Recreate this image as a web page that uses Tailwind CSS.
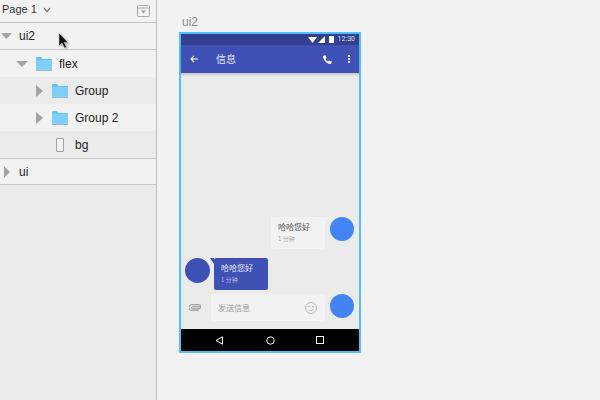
<!DOCTYPE html>
<html><head><meta charset="utf-8"><script src="https://cdn.jsdelivr.net/npm/@tailwindcss/browser@4"></script></head>
<body class="m-0">
<div class="relative w-[600px] h-[400px] overflow-hidden flex bg-[#f2f2f2] text-[12px] text-[#222] font-['Liberation_Sans','Noto_Sans_CJK_SC',sans-serif]">
  <aside class="w-[157px] h-full shrink-0 bg-[#ebebeb] border-r border-[#bdbdbd] flex flex-col">
    <div class="h-[23px] shrink-0 bg-[#f2f2f2] border-b border-[#c4c4c4] flex items-center pl-[2px] pr-[6px]">
      <span class="text-[#333] text-[11px] -mt-[3px]">Page 1</span>
      <svg class="ml-[6px] -mt-[3px]" width="8" height="6" viewBox="0 0 8 6"><path d="M1 1l3 3.500L7 1" fill="none" stroke="#777" stroke-width="1.300"/></svg>
      <svg class="ml-auto" width="13" height="12" viewBox="0 0 13 12"><rect x=".5" y=".5" width="12" height="11" rx="1" fill="none" stroke="#a8a8a8"/><path d="M1 3h11" stroke="#a8a8a8"/><path d="M4 5.500h5L6.500 8.500z" fill="#a0a0a0"/></svg>
    </div>
    <div class="h-[27px] shrink-0 bg-[#f2f2f2] border-b border-[#c8c8c8] flex items-center pl-[1px]">
      <svg width="11" height="6" viewBox="0 0 11 6"><path d="M0 0h11L5.500 6z" fill="#a3a3a3"/></svg>
      <span class="ml-[7px]">ui2</span>
    </div>
    <div class="h-[27px] shrink-0 bg-[#f2f2f2] flex items-center pl-[16px]">
      <svg width="12" height="6" viewBox="0 0 12 6"><path d="M0 0h12L6 6z" fill="#a3a3a3"/></svg>
      <svg class="ml-[8px]" width="16" height="15" viewBox="0 0 16 15"><path d="M0 2a1 1 0 0 1 1-1h4l1.500 2H16v12H0z" fill="#66c4f5"/><path d="M0 4h16v11H0z" fill="#7ed0fa"/><path d="M0 14h16v1H0z" fill="#9fb9c8"/></svg>
      <span class="ml-[7px]">flex</span>
    </div>
    <div class="h-[27px] shrink-0 bg-[#ebebeb] flex items-center pl-[36px]">
      <svg width="7" height="12" viewBox="0 0 7 12"><path d="M0 0l7 6-7 6z" fill="#a3a3a3"/></svg>
      <svg class="ml-[9px]" width="16" height="15" viewBox="0 0 16 15"><path d="M0 2a1 1 0 0 1 1-1h4l1.500 2H16v12H0z" fill="#66c4f5"/><path d="M0 4h16v11H0z" fill="#7ed0fa"/><path d="M0 14h16v1H0z" fill="#9fb9c8"/></svg>
      <span class="ml-[7px]">Group</span>
    </div>
    <div class="h-[27px] shrink-0 bg-[#f2f2f2] flex items-center pl-[36px]">
      <svg width="7" height="12" viewBox="0 0 7 12"><path d="M0 0l7 6-7 6z" fill="#a3a3a3"/></svg>
      <svg class="ml-[9px]" width="16" height="15" viewBox="0 0 16 15"><path d="M0 2a1 1 0 0 1 1-1h4l1.500 2H16v12H0z" fill="#66c4f5"/><path d="M0 4h16v11H0z" fill="#7ed0fa"/><path d="M0 14h16v1H0z" fill="#9fb9c8"/></svg>
      <span class="ml-[7px]">Group 2</span>
    </div>
    <div class="h-[28px] shrink-0 bg-[#ebebeb] border-b border-[#c8c8c8] flex items-center pl-[56px]">
      <div class="w-[8px] h-[14px] border border-[#a3a3a3] rounded-[1px] bg-[#f2f2f2]"></div>
      <span class="ml-[11px]">bg</span>
    </div>
    <div class="h-[26px] shrink-0 bg-[#f2f2f2] border-b border-[#c8c8c8] flex items-center pl-[4px]">
      <svg width="6" height="12" viewBox="0 0 6 12"><path d="M0 0l6 6-6 6z" fill="#a3a3a3"/></svg>
      <span class="ml-[9px]">ui</span>
    </div>
  </aside>
  <main class="pl-[22px] pt-[15px]">
    <div class="h-[17px] ml-[3px] text-[#8a8a8a] leading-[14px]">ui2</div>
    <div class="w-[182px] h-[321px] border-2 border-[#4fc0fb] flex flex-col bg-[#ebebeb] text-[#555]">
      <div class="h-[11px] shrink-0 bg-[#31408f] flex items-center justify-end pr-[4px] text-white">
        <svg width="9" height="6" viewBox="0 0 9 6"><path d="M0 0h9L4.500 6z" fill="#fff"/></svg>
        <svg class="ml-[1px]" width="7" height="7" viewBox="0 0 7 7"><path d="M7 0v7H0z" fill="#fff"/></svg>
        <div class="w-[5px] h-[7px] bg-white ml-[4px] mr-[4px]"></div>
        <span class="text-[7px] leading-none font-['Roboto'] text-[#dde0f0]">12:30</span>
      </div>
      <div class="h-[28px] shrink-0 bg-[#3f51b5] shadow-[0_2px_2px_rgba(0,0,0,0.15)] flex items-center text-white">
        <svg class="ml-[9px]" width="8" height="8" viewBox="0 0 8 8"><path d="M8 4H1M4 1L1 4l3 3" fill="none" stroke="#fff" stroke-width="1.100"/></svg>
        <span class="ml-[18px] -mt-[1px] text-[10px] font-['Noto_Sans_CJK_SC'] text-[#e6e8f5]">信息</span>
        <svg class="ml-auto" width="9" height="9" viewBox="0 0 9 9"><path d="M1 0.500l1.500-.3L3.500 3 2.500 4C3 5.200 3.800 6 5 6.500l1-1 2.800 1L8.500 8 7.500 9C3.500 8.500.5 5.500 0 1.500z" fill="#fff"/></svg>
        <svg class="ml-[16px] mr-[9px]" width="2" height="8" viewBox="0 0 2 8"><path d="M0 0h2v1.800H0zM0 3h2v1.800H0zM0 6h2v1.800H0z" fill="#fff"/></svg>
      </div>
      <div class="flex-1 flex flex-col justify-end">
        <div class="flex justify-end items-start pr-[5px] mb-[9px]">
          <div class="w-[54px] h-[32px] bg-[#f2f2f2] rounded-[2px] pl-[7px] pt-[4px]">
            <div class="text-[8px] leading-[12px] text-[#555] font-['Noto_Sans_CJK_SC']">哈哈您好</div>
            <div class="text-[6px] leading-[10px] mt-[1px] text-[#aaa] font-['Noto_Sans_CJK_SC']">1 分钟</div>
          </div>
          <svg width="4" height="6" viewBox="0 0 4 6"><path d="M0 0h4L0 6z" fill="#eeeeee"/></svg>
          <div class="w-[24px] h-[24px] rounded-full bg-[#4285f4] ml-[1px]"></div>
        </div>
        <div class="flex items-start pl-[4px] mb-[3px]">
          <div class="w-[25px] h-[25px] rounded-full bg-[#3f51b5]"></div>
          <svg width="4" height="6" viewBox="0 0 4 6"><path d="M4 0H0l4 6z" fill="#3f51b5"/></svg>
          <div class="w-[54px] h-[32px] bg-[#3f51b5] rounded-[2px] pl-[7px] pt-[4px]">
            <div class="text-[8px] leading-[12px] text-[#e6e8f5] font-['Noto_Sans_CJK_SC']">哈哈您好</div>
            <div class="text-[6px] leading-[10px] mt-[1px] text-[#b5bce2] font-['Noto_Sans_CJK_SC']">1 分钟</div>
          </div>
        </div>
        <div class="flex items-start h-[27px] mb-[8px] mt-[1px]">
          <svg class="ml-[8px] mt-[10px]" width="12" height="7" viewBox="0 0 12 7"><path d="M11.500 2.700H3.500a1 1 0 0 0 0 2h6.500a2 2 0 0 0 0-4H2.700a2.200 2.200 0 0 0 0 5.600h7" fill="none" stroke="#888" stroke-width=".9"/></svg>
          <div class="ml-[10px] w-[114px] h-[27px] bg-[#f2f2f2] rounded-[2px] flex items-center pl-[7px] text-[8px] text-[#999] font-['Noto_Sans_CJK_SC']">发送信息
            <svg class="ml-auto mr-[8px]" width="12" height="12" viewBox="0 0 12 12"><circle cx="6" cy="6" r="5.500" fill="none" stroke="#aaa" stroke-width=".8"/><circle cx="4" cy="4.500" r=".7" fill="#aaa"/><circle cx="8" cy="4.500" r=".7" fill="#aaa"/><path d="M3.300 7.500c1.300 1.600 4 1.600 5.400 0" fill="none" stroke="#aaa" stroke-width=".8"/></svg>
          </div>
          <svg width="4" height="6" viewBox="0 0 4 6"><path d="M0 0h4L0 6z" fill="#eeeeee"/></svg>
          <div class="w-[24px] h-[24px] rounded-full bg-[#4285f4] ml-[1px]"></div>
        </div>
      </div>
      <div class="h-[22px] shrink-0 bg-black flex items-center">
        <svg class="ml-[34px]" width="8" height="9" viewBox="0 0 8 9"><path d="M7.500.8v7.400L1 4.500z" fill="none" stroke="#fff"/></svg>
        <svg class="ml-[43px]" width="9" height="9" viewBox="0 0 9 9"><circle cx="4.500" cy="4.500" r="3.700" fill="none" stroke="#fff"/></svg>
        <svg class="ml-[41px]" width="8" height="8" viewBox="0 0 8 8"><rect x=".5" y=".5" width="7" height="7" fill="none" stroke="#fff"/></svg>
      </div>
    </div>
  </main>
  <svg class="absolute left-[58px] top-[33px] drop-shadow-[1px_1px_1px_rgba(0,0,0,0.35)]" width="12" height="17" viewBox="0 0 12 17"><path d="M1 0v13l3-3 2.500 5 2-1L6 9.500h4z" fill="#111" stroke="#ddd" stroke-width=".5"/></svg>
</div>
</body></html>
